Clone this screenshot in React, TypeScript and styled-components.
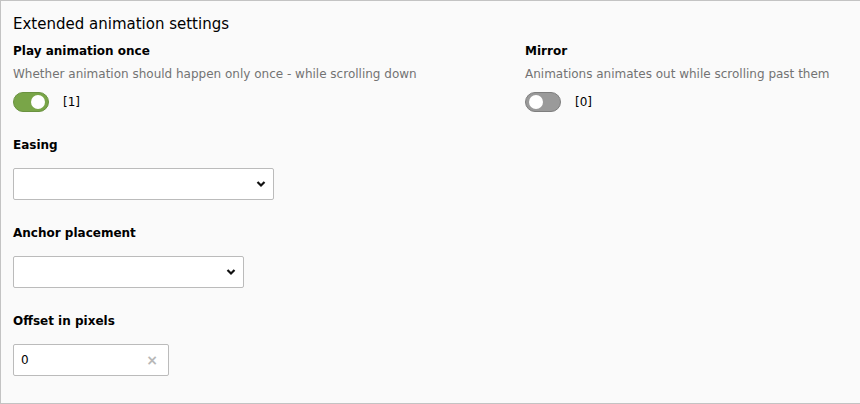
import React from "react";
import styled, { createGlobalStyle } from "styled-components";

const Global = createGlobalStyle`
  html, body { margin: 0; padding: 0; background: #fff; }
  body { font-family: "DejaVu Sans", Verdana, sans-serif; color: #000; }
  * { box-sizing: border-box; }
`;

const Panel = styled.div`
  width: 862px;
  height: 404px;
  background: #fafafa;
  border: 1px solid #c3c3c3;
  padding: 11px 12px 0 12px;
  overflow: hidden;
`;

const Title = styled.h2`
  margin: 0 0 5px 0;
  font-size: 15px;
  line-height: 24px;
  font-weight: normal;
  color: #000;
`;

const Row = styled.div`
  display: grid;
  grid-template-columns: 512px 1fr;
`;

const Field = styled.div`
  display: flex;
  flex-direction: column;
  margin-bottom: 23px;
`;

const Label = styled.div<{ $mb: number }>`
  font-size: 12px;
  line-height: 20px;
  font-weight: bold;
  color: #000;
  margin-bottom: ${(p) => p.$mb}px;
`;

const Desc = styled.div`
  font-size: 12px;
  line-height: 20px;
  color: #737373;
  margin-bottom: 8px;
`;

const ToggleRow = styled.div`
  display: flex;
  align-items: center;
  gap: 14px;
  height: 20px;
  font-size: 12px;
  color: #000;
`;

const Toggle = styled.span<{ $on: boolean }>`
  display: inline-block;
  position: relative;
  width: 36px;
  height: 20px;
  border-radius: 10px;
  background: ${(p) => (p.$on ? "#79a548" : "#9a9a9a")};
  border: 1px solid ${(p) => (p.$on ? "#6a9240" : "#7e7e7e")};
  &::after {
    content: "";
    position: absolute;
    top: 2px;
    ${(p) => (p.$on ? "right: 3px;" : "left: 3px;")}
    width: 14px;
    height: 14px;
    border-radius: 50%;
    background: #fff;
  }
`;

const Select = styled.div<{ $w: number }>`
  width: ${(p) => p.$w}px;
  height: 32px;
  background: #fff;
  border: 1px solid #bbbbbb;
  border-radius: 2px;
  display: flex;
  align-items: center;
  justify-content: flex-end;
  padding-right: 7px;
`;

const Input = styled.div`
  width: 156px;
  height: 32px;
  background: #fff;
  border: 1px solid #bbbbbb;
  border-radius: 2px;
  display: flex;
  align-items: center;
  justify-content: space-between;
  padding: 0 10px 0 7px;
  font-size: 12px;
  color: #000;
`;

const Clear = styled.span`
  color: #b8b8b8;
  font-size: 14px;
  line-height: 1;
  font-weight: bold;
`;

const Chevron = () => (
  <svg width="10" height="8" viewBox="0 0 10 8">
    <path d="M1.5 2 L5 5.5 L8.5 2" fill="none" stroke="#111" strokeWidth="2.2" />
  </svg>
);

export default function App() {
  return (
    <>
      <Global />
      <Panel>
        <Title>Extended animation settings</Title>
        <Row>
          <Field>
            <Label $mb={3}>Play animation once</Label>
            <Desc>Whether animation should happen only once - while scrolling down</Desc>
            <ToggleRow>
              <Toggle $on={true} />
              <span>[1]</span>
            </ToggleRow>
          </Field>
          <Field>
            <Label $mb={3}>Mirror</Label>
            <Desc>Animations animates out while scrolling past them</Desc>
            <ToggleRow>
              <Toggle $on={false} />
              <span>[0]</span>
            </ToggleRow>
          </Field>
        </Row>
        <Field>
          <Label $mb={13}>Easing</Label>
          <Select $w={261}>
            <Chevron />
          </Select>
        </Field>
        <Field>
          <Label $mb={13}>Anchor placement</Label>
          <Select $w={231}>
            <Chevron />
          </Select>
        </Field>
        <Field>
          <Label $mb={13}>Offset in pixels</Label>
          <Input>
            <span>0</span>
            <Clear>×</Clear>
          </Input>
        </Field>
      </Panel>
    </>
  );
}
